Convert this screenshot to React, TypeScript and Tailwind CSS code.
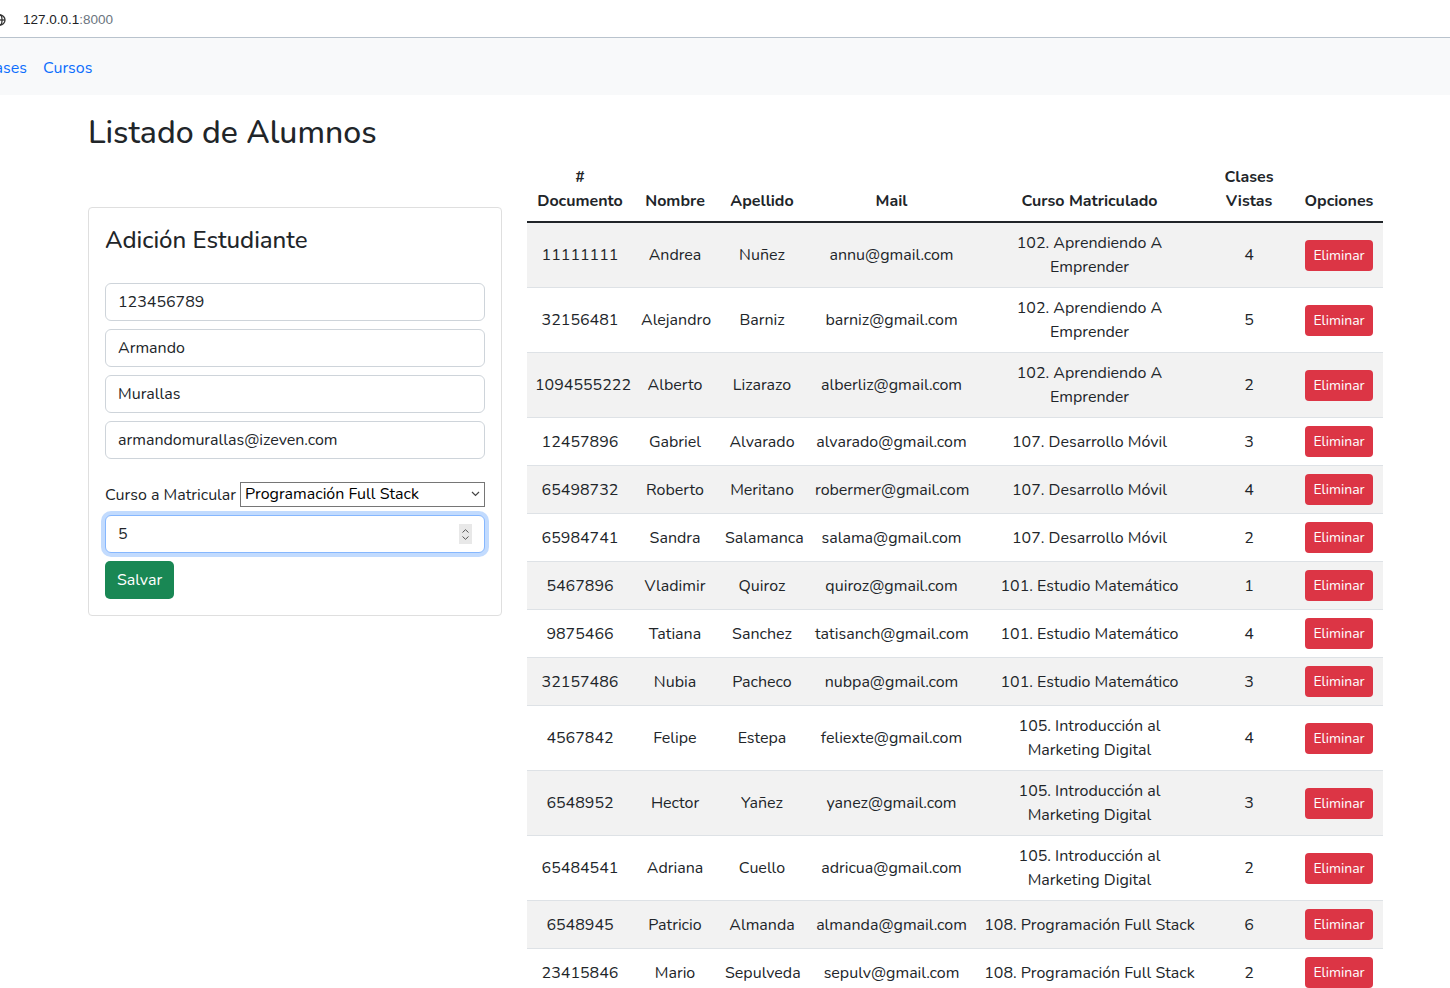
import React from "react";

type Alumno = {
  doc: string;
  nombre: string;
  apellido: string;
  mail: string;
  curso: string[];
  clases: number;
};

const alumnos: Alumno[] = [
  { doc: "11111111", nombre: "Andrea", apellido: "Nuñez", mail: "annu@gmail.com", curso: ["102. Aprendiendo A", "Emprender"], clases: 4 },
  { doc: "32156481", nombre: "Alejandro", apellido: "Barniz", mail: "barniz@gmail.com", curso: ["102. Aprendiendo A", "Emprender"], clases: 5 },
  { doc: "1094555222", nombre: "Alberto", apellido: "Lizarazo", mail: "alberliz@gmail.com", curso: ["102. Aprendiendo A", "Emprender"], clases: 2 },
  { doc: "12457896", nombre: "Gabriel", apellido: "Alvarado", mail: "alvarado@gmail.com", curso: ["107. Desarrollo Móvil"], clases: 3 },
  { doc: "65498732", nombre: "Roberto", apellido: "Meritano", mail: "robermer@gmail.com", curso: ["107. Desarrollo Móvil"], clases: 4 },
  { doc: "65984741", nombre: "Sandra", apellido: "Salamanca", mail: "salama@gmail.com", curso: ["107. Desarrollo Móvil"], clases: 2 },
  { doc: "5467896", nombre: "Vladimir", apellido: "Quiroz", mail: "quiroz@gmail.com", curso: ["101. Estudio Matemático"], clases: 1 },
  { doc: "9875466", nombre: "Tatiana", apellido: "Sanchez", mail: "tatisanch@gmail.com", curso: ["101. Estudio Matemático"], clases: 4 },
  { doc: "32157486", nombre: "Nubia", apellido: "Pacheco", mail: "nubpa@gmail.com", curso: ["101. Estudio Matemático"], clases: 3 },
  { doc: "4567842", nombre: "Felipe", apellido: "Estepa", mail: "feliexte@gmail.com", curso: ["105. Introducción al", "Marketing Digital"], clases: 4 },
  { doc: "6548952", nombre: "Hector", apellido: "Yañez", mail: "yanez@gmail.com", curso: ["105. Introducción al", "Marketing Digital"], clases: 3 },
  { doc: "65484541", nombre: "Adriana", apellido: "Cuello", mail: "adricua@gmail.com", curso: ["105. Introducción al", "Marketing Digital"], clases: 2 },
  { doc: "6548945", nombre: "Patricio", apellido: "Almanda", mail: "almanda@gmail.com", curso: ["108. Programación Full Stack"], clases: 6 },
  { doc: "23415846", nombre: "Mario", apellido: "Sepulveda", mail: "sepulv@gmail.com", curso: ["108. Programación Full Stack"], clases: 2 },
];

const inputCls =
  "block w-full h-[38px] px-3 border border-[#ced4da] rounded-[6px] bg-white text-[16px] text-[#212529] outline-none";

function AddressBar() {
  return (
    <div className="h-[38px] bg-white border-b border-[#b9c3cd] flex items-center pt-[3px] overflow-hidden font-['Liberation_Sans',Arial,sans-serif]">
      <svg className="ml-[-6px] w-[12px] h-[12px]" viewBox="0 0 12 12" fill="none" stroke="#333" strokeWidth="1.3">
        <circle cx="6" cy="6" r="5" />
        <ellipse cx="6" cy="6" rx="2" ry="5" />
        <path d="M1 6h10" />
      </svg>
      <span className="ml-[17px] text-[13.5px] text-[#202124]">
        127.0.0.1<span className="text-[#6c7580]">:8000</span>
      </span>
    </div>
  );
}

function Navbar() {
  return (
    <nav className="h-[57px] bg-[#f8f9fa] flex items-center pt-[2px] overflow-hidden">
      <div className="flex ml-[-29px] text-[16px] text-[#0d6efd]">
        <a className="px-2">Clases</a>
        <a className="px-2">Cursos</a>
      </div>
    </nav>
  );
}

function FormCard() {
  return (
    <div className="w-[414px] mt-[55px] border border-[#dfdfdf] rounded-[4px] bg-white p-4 self-start">
      <h4 className="text-[24px] leading-[29px] font-medium text-[#212529] mt-[2px] mb-[28px]">Adición Estudiante</h4>
      <div className="flex flex-col gap-2">
        <input className={inputCls} defaultValue="123456789" />
        <input className={inputCls} defaultValue="Armando" />
        <input className={inputCls} defaultValue="Murallas" />
        <input className={inputCls} defaultValue="armandomurallas@izeven.com" />
      </div>
      <div className="flex items-center mt-[23px] text-[16px] text-[#212529]">
        <label className="mr-[4px]">Curso a Matricular</label>
        <div className="relative flex-1">
          <select
            className="appearance-none block w-full h-[25px] border border-[#767676] bg-white pl-[4px] text-[16px] leading-[23px] text-black outline-none"
            defaultValue="fs"
          >
            <option value="fs">Programación Full Stack</option>
          </select>
          <svg className="absolute right-[5px] top-[9px] w-[9px] h-[6px] pointer-events-none" viewBox="0 0 9 6" fill="none" stroke="#444" strokeWidth="1.2">
            <path d="M1 1l3.5 3.5L8 1" />
          </svg>
        </div>
      </div>
      <div className="relative mt-2">
        <input
          className="block w-full h-[38px] px-3 border border-[#86b7fe] rounded-[6px] bg-white text-[16px] text-[#212529] outline-none shadow-[0_0_0_4px_rgba(13,110,253,0.25)]"
          defaultValue="5"
        />
        <div className="absolute right-[13px] top-[9px] w-[13px] h-[20px] bg-[#e8e8e8] flex flex-col items-center justify-center gap-[3px]">
          <svg className="w-[7px] h-[4px]" viewBox="0 0 7 4" fill="none" stroke="#555" strokeWidth="1">
            <path d="M0.5 3.5L3.5 0.7L6.5 3.5" />
          </svg>
          <svg className="w-[7px] h-[4px]" viewBox="0 0 7 4" fill="none" stroke="#555" strokeWidth="1">
            <path d="M0.5 0.5L3.5 3.3L6.5 0.5" />
          </svg>
        </div>
      </div>
      <button className="mt-2 h-[38px] px-3 rounded-[5px] bg-[#198754] text-white text-[16px]">Salvar</button>
    </div>
  );
}

function Tabla() {
  const widths = ["w-[106px]", "w-[84px]", "w-[90px]", "w-[169px]", "w-[227px]", "w-[92px]", "w-[88px]"];
  return (
    <table className="w-[856px] table-fixed border-collapse text-[16px] text-[#212529] leading-[24px] mt-[5px] self-start">
      <thead>
        <tr className="border-b-2 border-[#212529]">
          {[["#", "Documento"], ["Nombre"], ["Apellido"], ["Mail"], ["Curso Matriculado"], ["Clases", "Vistas"], ["Opciones"]].map((h, i) => (
            <th key={i} className={`${widths[i]} p-2 align-bottom text-center font-bold`}>
              {h.map((l) => (
                <div key={l}>{l}</div>
              ))}
            </th>
          ))}
        </tr>
      </thead>
      <tbody>
        {alumnos.map((a, i) => (
          <tr key={a.doc} className={`border-b border-[#dee2e6] ${i % 2 === 0 ? "bg-[#f2f2f2]" : "bg-white"}`}>
            <td className="p-2 text-center align-middle">{a.doc}</td>
            <td className="p-2 text-center align-middle">{a.nombre}</td>
            <td className="p-2 text-center align-middle">{a.apellido}</td>
            <td className="p-2 text-center align-middle whitespace-nowrap">{a.mail}</td>
            <td className="p-2 text-center align-middle">
              {a.curso.map((l) => (
                <div key={l} className="whitespace-nowrap">{l}</div>
              ))}
            </td>
            <td className="p-2 text-center align-middle">{a.clases}</td>
            <td className="p-2 text-center align-middle">
              <button className="h-[31px] px-2 rounded-[4px] bg-[#dc3545] text-white text-[14px] leading-[21px]">Eliminar</button>
            </td>
          </tr>
        ))}
      </tbody>
    </table>
  );
}

export default function App() {
  return (
    <div className="min-h-[988px] bg-white font-['Nunito',Lato,'Liberation_Sans',sans-serif] text-[#212529] overflow-hidden">
      <AddressBar />
      <Navbar />
      <div className="pl-[88px]">
        <h2 className="mt-[19px] text-[32px] leading-[38px] font-medium">Listado de Alumnos</h2>
        <div className="flex gap-[25px]">
          <FormCard />
          <Tabla />
        </div>
      </div>
    </div>
  );
}
